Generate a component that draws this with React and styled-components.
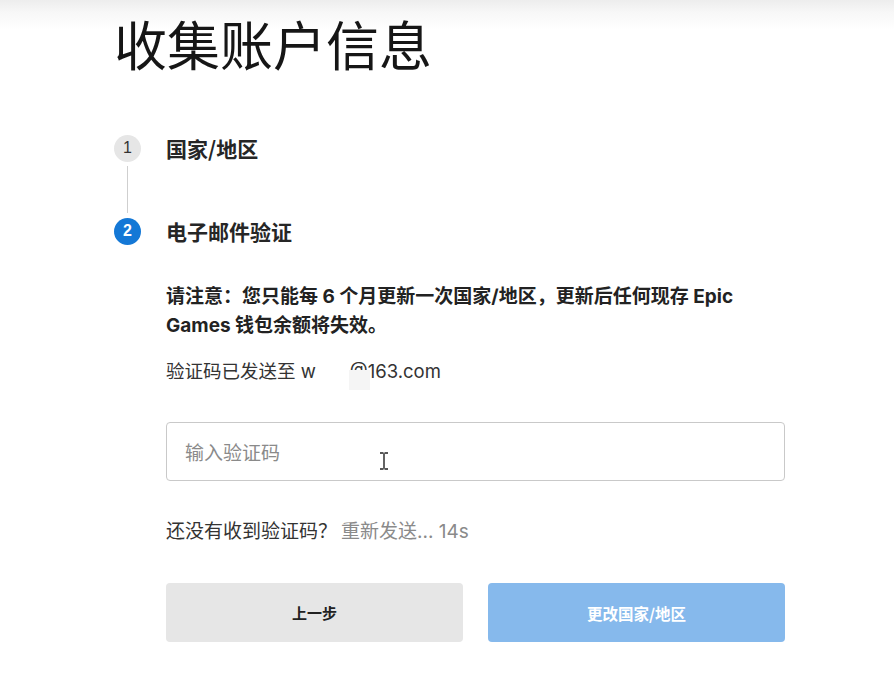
import React from "react";
import styled, { createGlobalStyle } from "styled-components";

const Global = createGlobalStyle`
  html, body { margin: 0; padding: 0; background: #fff; }
  body {
    font-family: Inter, "Noto Sans CJK SC", "Noto Sans", sans-serif;
    color: #202020;
  }
`;

const Page = styled.div`
  width: 894px;
  height: 675px;
  overflow: hidden;
  background: linear-gradient(to bottom, #ededed 0px, #f7f7f7 12px, #ffffff 30px);
  padding-left: 114px;
  box-sizing: border-box;
`;

const Title = styled.h1`
  margin: 0;
  padding-top: 12px;
  font-size: 53px;
  line-height: 62px;
  font-weight: 400;
  color: #161616;
  font-family: "Noto Sans CJK SC", sans-serif;
`;

const Steps = styled.div`
  margin-top: 60px;
  display: flex;
  flex-direction: column;
`;

const StepRow = styled.div`
  display: flex;
  align-items: center;
  gap: 25px;
  height: 28px;
`;

const Circle = styled.div`
  width: 27px;
  height: 27px;
  border-radius: 50%;
  flex: none;
  display: flex;
  align-items: center;
  justify-content: center;
  font-family: "Liberation Sans", Arial, sans-serif;
  font-size: 16px;
  font-weight: ${(p) => (p.$active ? 700 : 400)};
  background: ${(p) => (p.$active ? "#1478d6" : "#e6e6e6")};
  color: ${(p) => (p.$active ? "#fff" : "#333")};
`;

const StepLabel = styled.div`
  font-family: "Noto Sans CJK SC", sans-serif;
  font-size: 21px;
  font-weight: 700;
  color: #262626;
`;

const Connector = styled.div`
  width: 1px;
  height: 47px;
  margin: 4px 0 4px 13px;
  background: #cfcfcf;
`;

const Body = styled.div`
  padding-left: 52px;
  width: 619px;
`;

const Notice = styled.p`
  margin: 37px 0 0;
  font-size: 19px;
  line-height: 29px;
  font-weight: 700;
  color: #222;
  width: 600px;
`;

const Sent = styled.div`
  margin-top: 18px;
  font-size: 18.5px;
  line-height: 26px;
  color: #333;
  display: flex;
  align-items: center;
  position: relative;
`;

const Gap = styled.span`
  display: inline-block;
  width: 34px;
`;

const Patch = styled.span`
  position: absolute;
  left: 183px;
  top: 12px;
  width: 21px;
  height: 20px;
  background: #f5f5f5;
`;

const InputWrap = styled.div`
  position: relative;
  margin-top: 38px;
`;

const Input = styled.input`
  box-sizing: border-box;
  width: 619px;
  height: 59px;
  border: 1px solid #c9c9c9;
  border-radius: 4px;
  padding: 0 18px;
  font-family: "Noto Sans CJK SC", sans-serif;
  font-size: 19px;
  color: #222;
  outline: none;
  &::placeholder { color: #8a8a8a; }
`;

const Cursor = styled.svg`
  position: absolute;
  left: 213px;
  top: 30px;
  pointer-events: none;
`;

const Resend = styled.p`
  margin: 38px 0 0;
  font-size: 19px;
  line-height: 26px;
  color: #333;
`;

const Muted = styled.span`
  color: #8a8a8a;
  margin-left: 4px;
`;

const Buttons = styled.div`
  margin-top: 38px;
  display: grid;
  grid-template-columns: 1fr 1fr;
  gap: 25px;
`;

const Button = styled.button`
  height: 59px;
  border: none;
  border-radius: 4px;
  font-family: "Noto Sans CJK SC", sans-serif;
  font-size: ${(p) => (p.$primary ? "15.5px" : "15px")};
  font-weight: 700;
  background: ${(p) => (p.$primary ? "#86b9ec" : "#e6e6e6")};
  color: ${(p) => (p.$primary ? "#ffffff" : "#222")};
`;

export default function App() {
  return (
    <>
      <Global />
      <Page>
        <Title>收集账户信息</Title>
        <Steps>
          <StepRow>
            <Circle>1</Circle>
            <StepLabel>国家/地区</StepLabel>
          </StepRow>
          <Connector />
          <StepRow>
            <Circle $active>2</Circle>
            <StepLabel>电子邮件验证</StepLabel>
          </StepRow>
        </Steps>
        <Body>
          <Notice>
            请注意：您只能每 6 个月更新一次国家/地区，更新后任何现存 Epic Games 钱包余额将失效。
          </Notice>
          <Sent>
            验证码已发送至 w
            <Gap />
            @163.com
            <Patch />
          </Sent>
          <InputWrap>
            <Input placeholder="输入验证码" />
            <Cursor width="10" height="18" viewBox="0 0 10 18">
              <path d="M1 1h3.5M5.5 1H9M5 1.5v15M1 17h3.5M5.5 17H9" stroke="#222" strokeWidth="1.4" fill="none" />
            </Cursor>
          </InputWrap>
          <Resend>
            还没有收到验证码？<Muted>重新发送... 14s</Muted>
          </Resend>
          <Buttons>
            <Button>上一步</Button>
            <Button $primary>更改国家/地区</Button>
          </Buttons>
        </Body>
      </Page>
    </>
  );
}
